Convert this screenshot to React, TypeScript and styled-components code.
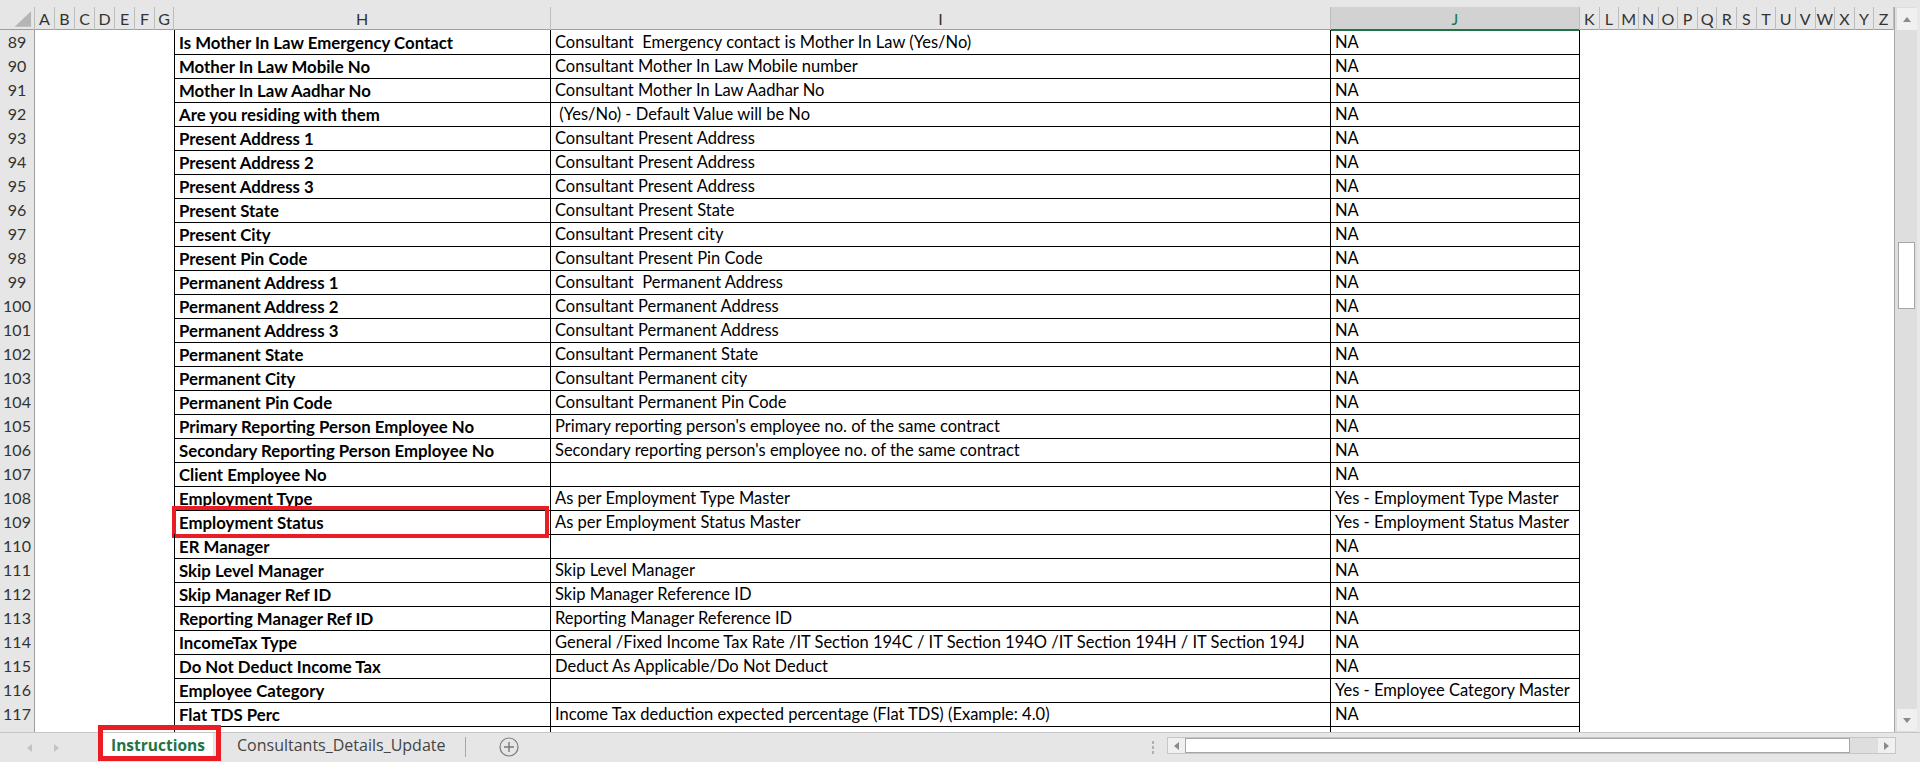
import React from "react"
import styled, { createGlobalStyle } from "styled-components"

const GlobalStyle = createGlobalStyle`
  html, body {
    margin: 0;
    padding: 0;
  }
  body {
    font-family: Lato, "Liberation Sans", sans-serif;
    background: #e6e6e6;
  }
`

const DATA_COLS = `35px repeat(6, 20px) 19px 377px 780px 249px 1fr`
const HEAD_COLS = `35px repeat(6, 20px) 19px 377px 780px 249px repeat(16, 1fr)`

type Row = { n: number; h: string; i: string; j: string }

const rows: Row[] = [
  { n: 89, h: 'Is Mother In Law Emergency Contact', i: 'Consultant  Emergency contact is Mother In Law (Yes/No)', j: 'NA' },
  { n: 90, h: 'Mother In Law Mobile No', i: 'Consultant Mother In Law Mobile number', j: 'NA' },
  { n: 91, h: 'Mother In Law Aadhar No', i: 'Consultant Mother In Law Aadhar No', j: 'NA' },
  { n: 92, h: 'Are you residing with them', i: ' (Yes/No) - Default Value will be No', j: 'NA' },
  { n: 93, h: 'Present Address 1', i: 'Consultant Present Address', j: 'NA' },
  { n: 94, h: 'Present Address 2', i: 'Consultant Present Address', j: 'NA' },
  { n: 95, h: 'Present Address 3', i: 'Consultant Present Address', j: 'NA' },
  { n: 96, h: 'Present State', i: 'Consultant Present State', j: 'NA' },
  { n: 97, h: 'Present City', i: 'Consultant Present city', j: 'NA' },
  { n: 98, h: 'Present Pin Code', i: 'Consultant Present Pin Code', j: 'NA' },
  { n: 99, h: 'Permanent Address 1', i: 'Consultant  Permanent Address', j: 'NA' },
  { n: 100, h: 'Permanent Address 2', i: 'Consultant Permanent Address', j: 'NA' },
  { n: 101, h: 'Permanent Address 3', i: 'Consultant Permanent Address', j: 'NA' },
  { n: 102, h: 'Permanent State', i: 'Consultant Permanent State', j: 'NA' },
  { n: 103, h: 'Permanent City', i: 'Consultant Permanent city', j: 'NA' },
  { n: 104, h: 'Permanent Pin Code', i: 'Consultant Permanent Pin Code', j: 'NA' },
  { n: 105, h: 'Primary Reporting Person Employee No', i: "Primary reporting person's employee no. of the same contract", j: 'NA' },
  { n: 106, h: 'Secondary Reporting Person Employee No', i: "Secondary reporting person's employee no. of the same contract", j: 'NA' },
  { n: 107, h: 'Client Employee No', i: '', j: 'NA' },
  { n: 108, h: 'Employment Type', i: 'As per Employment Type Master', j: 'Yes - Employment Type Master' },
  { n: 109, h: 'Employment Status', i: 'As per Employment Status Master', j: 'Yes - Employment Status Master' },
  { n: 110, h: 'ER Manager', i: '', j: 'NA' },
  { n: 111, h: 'Skip Level Manager', i: 'Skip Level Manager', j: 'NA' },
  { n: 112, h: 'Skip Manager Ref ID', i: 'Skip Manager Reference ID', j: 'NA' },
  { n: 113, h: 'Reporting Manager Ref ID', i: 'Reporting Manager Reference ID', j: 'NA' },
  { n: 114, h: 'IncomeTax Type', i: 'General /Fixed Income Tax Rate /IT Section 194C / IT Section 194O /IT Section 194H / IT Section 194J', j: 'NA' },
  { n: 115, h: 'Do Not Deduct Income Tax', i: 'Deduct As Applicable/Do Not Deduct', j: 'NA' },
  { n: 116, h: 'Employee Category', i: '', j: 'Yes - Employee Category Master' },
  { n: 117, h: 'Flat TDS Perc', i: 'Income Tax deduction expected percentage (Flat TDS) (Example: 4.0)', j: 'NA' },
]

const narrowLeft = ['A', 'B', 'C', 'D', 'E', 'F', 'G']
const narrowRight = ['K', 'L', 'M', 'N', 'O', 'P', 'Q', 'R', 'S', 'T', 'U', 'V', 'W', 'X', 'Y', 'Z']

export default function App() {
  return (
    <Window>
      <GlobalStyle />
      <TopStrip />
      <Body>
        <Sheet>
          <HeaderRow>
            <Corner>
              <svg width="35" height="23" viewBox="0 0 35 23">
                <polygon points="15,20 32,20 32,4" fill="#b5b5b5" />
              </svg>
            </Corner>
            {narrowLeft.map(l => <ColHead key={l}>{l}</ColHead>)}
            <ColHead>H</ColHead>
            <ColHead>I</ColHead>
            <ColHead $active>J</ColHead>
            {narrowRight.map(l => <ColHead key={l}>{l}</ColHead>)}
          </HeaderRow>

          {rows.map(r => (
            <DataRow key={r.n}>
              <RowNum>{r.n}</RowNum>
              <Blank />
              <Cell $bold $first>
                {r.h}
                {r.n === 109 && <Highlight />}
              </Cell>
              <Cell>{r.i}</Cell>
              <Cell>{r.j}</Cell>
              <div />
            </DataRow>
          ))}
          {/* partly hidden row 118 under the tab bar */}
          <DataRow>
            <RowNum />
            <Blank />
            <Cell $first />
            <Cell />
            <Cell />
            <div />
          </DataRow>
        </Sheet>

        <VScroll>
          <ScrollBtn><Arrow $dir="up" /></ScrollBtn>
          <VTrack>
            <VThumb />
          </VTrack>
          <ScrollBtn><Arrow $dir="down" /></ScrollBtn>
        </VScroll>
      </Body>

      <TabBar>
        <NavArrows>
          <Arrow $dir="left" $muted />
          <Arrow $dir="right" $muted />
        </NavArrows>
        <ActiveTab>
          Instructions
          <TabHighlight />
        </ActiveTab>
        <Tab>Consultants_Details_Update</Tab>
        <TabDivider />
        <AddSheet>
          <svg width="20" height="20" viewBox="0 0 20 20">
            <circle cx="10" cy="10" r="9" fill="none" stroke="#7a7a7a" strokeWidth="1.2" />
            <path d="M10 5 V15 M5 10 H15" stroke="#7a7a7a" strokeWidth="1.4" />
          </svg>
        </AddSheet>
        <Spacer />
        <Grip>
          <span /><span /><span />
        </Grip>
        <HScroll>
          <HBtn><Arrow $dir="left" /></HBtn>
          <HThumb />
          <HTrack />
          <HBtn><Arrow $dir="right" /></HBtn>
        </HScroll>
        <CornerGap />
      </TabBar>
    </Window>
  )
}

const Window = styled.div`
  width: 1920px;
  height: 762px;
  display: flex;
  flex-direction: column;
  overflow: hidden;
  background: #e6e6e6;
`
const TopStrip = styled.div`
  height: 7px;
  background: #e6e6e6;
  flex-shrink: 0;
`
const Body = styled.div`
  height: 725px;
  display: flex;
  flex-shrink: 0;
`
const Sheet = styled.div`
  flex: 1;
  overflow: hidden;
  background: #fff;
  border-right: 1px solid #a6a6a6;
`
const HeaderRow = styled.div`
  display: grid;
  grid-template-columns: ${HEAD_COLS};
  height: 23px;
  background: #e6e6e6;
  border-bottom: 1px solid #9e9e9e;
  box-sizing: border-box;
`
const Corner = styled.div`
  border-right: 1px solid #bdbdbd;
  display: flex;
`
const ColHead = styled.div<{ $active?: boolean }>`
  display: flex;
  align-items: center;
  justify-content: center;
  font-size: 16px;
  line-height: 22px;
  color: ${({ $active }) => ($active ? '#217346' : '#333')};
  background: ${({ $active }) => ($active ? '#d2d2d2' : 'transparent')};
  border-right: 1px solid #bdbdbd;
  box-shadow: ${({ $active }) => ($active ? 'inset 0 -2px 0 #217346' : 'none')};
  margin-bottom: ${({ $active }) => ($active ? '-1px' : '0')};
  overflow: hidden;
`
const DataRow = styled.div`
  display: grid;
  grid-template-columns: ${DATA_COLS};
  height: 24px;
  flex-shrink: 0;
`
const RowNum = styled.div`
  background: #e6e6e6;
  border-right: 1px solid #9e9e9e;
  border-bottom: 1px solid #c6c6c6;
  box-sizing: border-box;
  font-size: 16px;
  line-height: 24px;
  text-align: center;
  color: #333;
`
const Blank = styled.div`
  grid-column: span 7;
`
const Cell = styled.div<{ $bold?: boolean; $first?: boolean }>`
  position: relative;
  box-sizing: border-box;
  border-right: 1px solid #000;
  border-bottom: 1px solid #000;
  border-left: ${({ $first }) => ($first ? '1px solid #000' : 'none')};
  padding: 1px 4px 0;
  font-size: ${({ $bold }) => ($bold ? '16.8px' : '16.5px')};
  line-height: 23px;
  font-weight: ${({ $bold }) => ($bold ? 700 : 400)};
  color: #000;
  white-space: pre;
  overflow: visible;
`
const Highlight = styled.div`
  position: absolute;
  top: -4px;
  left: -3px;
  right: 1px;
  bottom: -4px;
  border: 4px solid #ec1c24;
  pointer-events: none;
`
const VScroll = styled.div`
  width: 25px;
  display: flex;
  flex-direction: column;
  background: #dedede;
  border-right: 3px solid #e9e9e9;
  box-sizing: border-box;
`
const ScrollBtn = styled.div`
  height: 22px;
  display: flex;
  align-items: center;
  justify-content: center;
  background: #f0f0f0;
  margin: 1px 0 1px 2px;
`
const VTrack = styled.div`
  flex: 1;
  padding: 211px 0 0 3px;
`
const VThumb = styled.div`
  width: 17px;
  height: 67px;
  background: #fff;
  border: 1px solid #a6a6a6;
  box-sizing: border-box;
`
const Arrow = styled.span<{ $dir: 'up' | 'down' | 'left' | 'right'; $muted?: boolean }>`
  width: 0;
  height: 0;
  border: 4px solid transparent;
  ${({ $dir, $muted }) => {
    const c = $muted ? '#c3c3c3' : '#8a8a8a'
    if ($dir === 'up') return `border-bottom: 5px solid ${c}; border-top-width: 0;`
    if ($dir === 'down') return `border-top: 5px solid ${c}; border-bottom-width: 0;`
    if ($dir === 'left') return `border-right: 5px solid ${c}; border-left-width: 0;`
    return `border-left: 5px solid ${c}; border-right-width: 0;`
  }}
`
const TabBar = styled.div`
  height: 30px;
  display: flex;
  align-items: flex-start;
  border-top: 1px solid #c6c6c6;
  box-sizing: border-box;
  background: #e6e6e6;
  font-family: "Open Sans", "Noto Sans", sans-serif;
`
const NavArrows = styled.div`
  width: 103px;
  height: 29px;
  display: flex;
  align-items: center;
  gap: 22px;
  padding-left: 27px;
  box-sizing: border-box;
`
const ActiveTab = styled.div`
  position: relative;
  width: 110px;
  height: 25px;
  background: #fff;
  color: #217346;
  font-weight: 700;
  font-size: 15.5px;
  line-height: 25px;
  text-align: center;
  white-space: nowrap;
`
const TabHighlight = styled.div`
  position: absolute;
  top: -8px;
  left: -5px;
  right: -8px;
  bottom: -3px;
  border: 5px solid #ec1c24;
  pointer-events: none;
`
const Tab = styled.div`
  width: 252px;
  height: 25px;
  padding-left: 24px;
  box-sizing: border-box;
  font-size: 16px;
  line-height: 25px;
  color: #444;
  white-space: nowrap;
`
const TabDivider = styled.div`
  width: 1px;
  height: 20px;
  margin-top: 4px;
  background: #a6a6a6;
`
const AddSheet = styled.div`
  margin: 4px 0 0 33px;
  display: flex;
`
const Spacer = styled.div`
  flex: 1;
`
const Grip = styled.div`
  width: 20px;
  height: 29px;
  display: flex;
  flex-direction: column;
  align-items: center;
  justify-content: center;
  gap: 2px;
  margin-right: 4px;

  & > span {
    width: 2px;
    height: 3px;
    background: #b0b0b0;
  }
`
const HScroll = styled.div`
  width: 729px;
  height: 17px;
  margin-top: 4px;
  display: flex;
  background: #dedede;
  border: 1px solid #c6c6c6;
  box-sizing: border-box;
`
const HBtn = styled.div`
  width: 17px;
  display: flex;
  align-items: center;
  justify-content: center;
  background: #f0f0f0;
`
const HThumb = styled.div`
  width: 665px;
  background: #fff;
  border: 1px solid #a6a6a6;
  box-sizing: border-box;
`
const HTrack = styled.div`
  flex: 1;
`
const CornerGap = styled.div`
  width: 24px;
`
